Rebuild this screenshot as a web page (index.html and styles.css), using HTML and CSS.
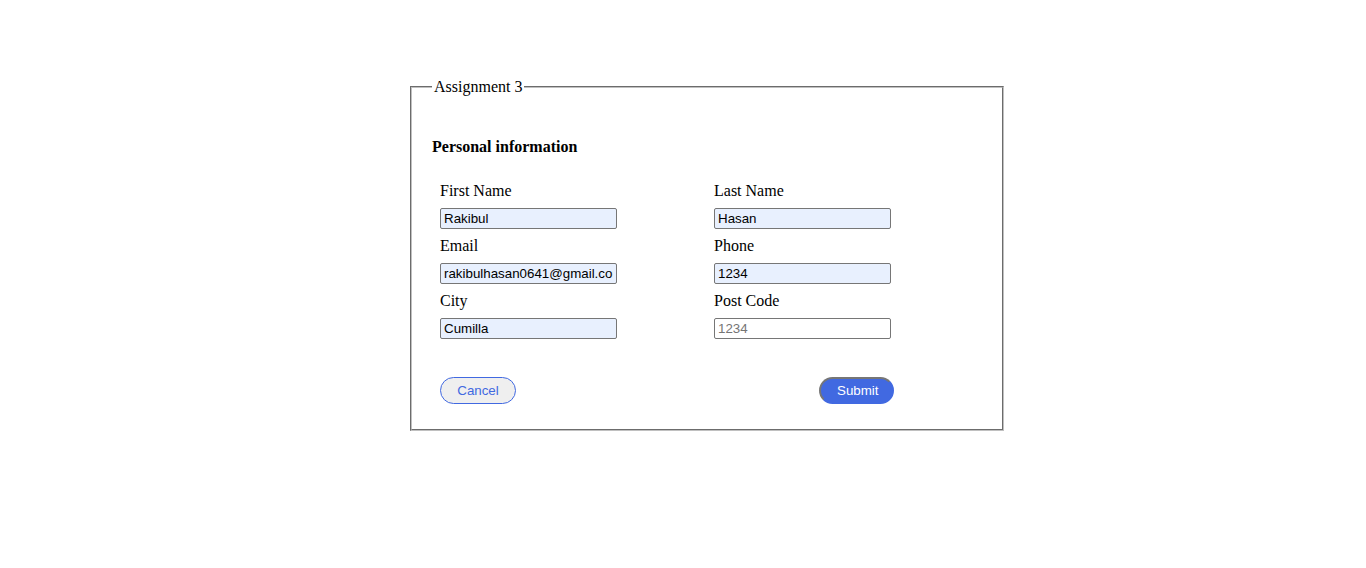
FILE: index.html
```html
<!DOCTYPE html>
<html>
<head>
<meta charset="utf-8">
<title>Assignment 3</title>
<link rel="stylesheet" href="styles.css">
</head>
<body>
<form class="page">
  <fieldset class="box">
    <legend class="box-title">Assignment 3</legend>
    <h4 class="section-title">Personal information</h4>
    <div class="fields">
      <div class="field">
        <label class="field-label" for="fname">First Name</label>
        <input class="field-input filled" id="fname" type="text" value="Rakibul">
      </div>
      <div class="field">
        <label class="field-label" for="lname">Last Name</label>
        <input class="field-input filled" id="lname" type="text" value="Hasan">
      </div>
      <div class="field">
        <label class="field-label" for="email">Email</label>
        <input class="field-input filled" id="email" type="text" value="rakibulhasan0641@gmail.com">
      </div>
      <div class="field">
        <label class="field-label" for="phone">Phone</label>
        <input class="field-input filled" id="phone" type="text" value="1234">
      </div>
      <div class="field">
        <label class="field-label" for="city">City</label>
        <input class="field-input filled" id="city" type="text" value="Cumilla">
      </div>
      <div class="field">
        <label class="field-label" for="post">Post Code</label>
        <input class="field-input" id="post" type="text" placeholder="1234">
      </div>
    </div>
    <div class="actions">
      <button class="btn btn-cancel" type="button">Cancel</button>
      <button class="btn btn-submit" type="button">Submit</button>
    </div>
  </fieldset>
</form>
</body>
</html>
```
FILE: styles.css
```css
html, body {
  margin: 0;
  padding: 0;
  background: #ffffff;
}

body {
  font-family: "Liberation Serif", "Times New Roman", serif;
  font-size: 16px;
  color: #000000;
}

.page {
  display: block;
  padding: 78px 0 0 410px;
}

.box {
  box-sizing: border-box;
  width: 594px;
  margin: 0;
  padding: 0 20px 25px 20px;
  border: 2px groove rgb(192, 192, 192);
  min-inline-size: 0;
}

.box-title {
  padding: 0 2px;
  font-size: 16px;
  line-height: 18px;
}

.section-title {
  margin: 42px 0 26px 0;
  font-size: 16px;
  font-weight: bold;
  line-height: 18px;
}

.fields {
  display: grid;
  grid-template-columns: 274px 274px;
  margin-left: 8px;
}

.field {
  display: flex;
  flex-direction: column;
  align-items: flex-start;
  margin-bottom: 8px;
}

.field-label {
  display: block;
  line-height: 18px;
  height: 18px;
  margin-bottom: 8px;
}

.field-input {
  box-sizing: border-box;
  width: 177px;
  height: 21px;
  margin: 0;
  padding: 1px 3px;
  border: 1px solid #767676;
  border-radius: 2px;
  background: #ffffff;
  color: #000000;
  font-family: "Liberation Sans", Arial, sans-serif;
  font-size: 13.333px;
  outline: none;
}

.field-input.filled {
  background: rgb(232, 240, 254);
}

.field-input::placeholder {
  color: #757575;
}

.actions {
  display: flex;
  justify-content: space-between;
  width: 454px;
  margin: 30px 0 0 8px;
}

.btn {
  box-sizing: border-box;
  height: 27px;
  padding: 0 16px;
  border-radius: 14px;
  font-family: "Liberation Sans", Arial, sans-serif;
  font-size: 13.333px;
  line-height: 15px;
  cursor: pointer;
}

.btn-cancel {
  width: 76px;
  background: #efefef;
  color: royalblue;
  border: 1px solid royalblue;
}

.btn-submit {
  width: 75px;
  background: royalblue;
  color: #ffffff;
  border-style: solid;
  border-width: 2px;
  border-color: #767676 transparent transparent #767676;
}
```
